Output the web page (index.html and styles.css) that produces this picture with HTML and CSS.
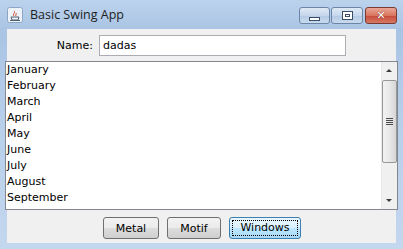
FILE: index.html
```html
<!DOCTYPE html>
<html lang="en">
<head>
  <meta charset="UTF-8" />
  <title>Basic Swing App</title>
  <link rel="stylesheet" href="styles.css">
</head>
<body>
  <div class="window">
    <div class="titlebar">
      <div class="app-icon">
        <svg width="16" height="16" viewBox="0 0 16 16">
          <rect x="0.5" y="0.5" width="15" height="15" rx="2" fill="#eef3f9" stroke="#8ea6c4"/>
          <path d="M4 10 h8 l-1 3 h-6 z" fill="none" stroke="#506070" stroke-width="1"/>
          <path d="M3 13.5 h10" stroke="#506070"/>
          <path d="M7 9 c-2 -2 2 -3 0 -5 M9 9 c-1 -1 1 -2 0 -3" fill="none" stroke="#d04020" stroke-width="1"/>
        </svg>
      </div>
      <span class="title">Basic Swing App</span>
      <div class="controls">
        <div class="ctl ctl-min"><span class="min-glyph"></span></div>
        <div class="ctl ctl-max"><span class="max-glyph"></span></div>
        <div class="ctl ctl-close">&#10005;</div>
      </div>
    </div>

    <div class="content">
      <div class="name-row">
        <label for="name">Name:</label>
        <input type="text" id="name" value="dadas" />
      </div>

      <div class="list">
        <ul class="items">
          <li>January</li>
          <li>February</li>
          <li>March</li>
          <li>April</li>
          <li>May</li>
          <li>June</li>
          <li>July</li>
          <li>August</li>
          <li>September</li>
          <li>October</li>
        </ul>
        <div class="scrollbar">
          <div class="arrow up"></div>
          <div class="track">
            <div class="thumb"><span class="grip"></span></div>
          </div>
          <div class="arrow down"></div>
        </div>
      </div>

      <div class="buttons">
        <button class="btn-metal">Metal</button>
        <button class="btn-motif">Motif</button>
        <button class="btn-windows focused"><span>Windows</span></button>
      </div>
    </div>
  </div>
</body>
</html>
```

FILE: styles.css
```css
* {
  box-sizing: border-box;
}

body {
  margin: 0;
  width: 403px;
  height: 249px;
  overflow: hidden;
  font-family: 'DejaVu Sans', Tahoma, sans-serif;
  font-size: 11px;
  color: #000;
}

.window {
  width: 403px;
  height: 249px;
  background: linear-gradient(to bottom, #bcd3ec 0px, #a9c4e4 30px, #b8cfea 120px, #c3d7ee 249px);
  padding: 0 6px 6px 6px;
  display: flex;
  flex-direction: column;
}

.titlebar {
  height: 29px;
  display: flex;
  align-items: center;
  padding-left: 1px;
}

.app-icon {
  width: 16px;
  height: 16px;
  margin-top: 1px;
}

.title {
  font-family: 'Open Sans', sans-serif;
  font-size: 12.5px;
  margin-left: 7px;
  margin-top: -1px;
  color: #1e1e1e;
}

.controls {
  margin-left: auto;
  display: flex;
  gap: 1px;
  align-self: flex-start;
  margin-top: 7px;
}

.ctl {
  height: 17px;
  width: 31px;
  border: 1px solid #6d86a8;
  border-radius: 3px;
  background: linear-gradient(to bottom, #dfe9f5 0%, #c6d7ec 50%, #b4c9e3 51%, #c8daee 100%);
  display: flex;
  align-items: center;
  justify-content: center;
}

.ctl-max {
  width: 32px;
}

.ctl-close {
  width: 32px;
  margin-left: 1px;
  border-color: #7a3a34;
  background: linear-gradient(to bottom, #e9a796 0%, #d8755f 50%, #c6493a 51%, #d67a62 100%);
  color: #fff;
  font-size: 11px;
  font-weight: bold;
  text-shadow: 0 0 1px #5a1a14;
}

.min-glyph {
  width: 11px;
  height: 4px;
  margin-top: 6px;
  background: #fff;
  border: 1px solid #3c4d66;
}

.max-glyph {
  width: 11px;
  height: 9px;
  background: #fff;
  border: 1px solid #3c4d66;
  box-shadow: inset 0 0 0 2px #fff, inset 0 0 0 3px #3c4d66;
}

.content {
  flex: 1;
  background: #f0f0f0;
  display: flex;
  flex-direction: column;
  margin: 0 1px;
}

.name-row {
  height: 32px;
  display: flex;
  align-items: center;
}

.name-row label {
  width: 86px;
  text-align: right;
  margin-right: 6px;
}

.name-row input {
  width: 247px;
  height: 21px;
  border: 1px solid #abadb3;
  padding: 0 3px;
  font-family: 'DejaVu Sans', sans-serif;
  font-size: 11px;
}

.list {
  height: 149px;
  margin: 0 -2px;
  border: 1px solid #828790;
  background: #fff;
  display: flex;
}

.items {
  list-style: none;
  margin: 0;
  padding: 0;
  flex: 1;
  overflow: hidden;
}

.items li {
  height: 16px;
  line-height: 16px;
  padding-left: 1px;
}

.scrollbar {
  width: 16px;
  background: #f0f0f0;
  border-left: 1px solid #e8e8e8;
  display: flex;
  flex-direction: column;
}

.arrow {
  height: 17px;
  position: relative;
}

.arrow::after {
  content: "";
  position: absolute;
  left: 4px;
  border-left: 3px solid transparent;
  border-right: 3px solid transparent;
}

.arrow.up::after {
  top: 7px;
  border-bottom: 3px solid #3a3a3a;
}

.arrow.down::after {
  top: 7px;
  border-top: 3px solid #3a3a3a;
}

.track {
  flex: 1;
  padding-top: 1px;
}

.thumb {
  height: 83px;
  border: 1px solid #979797;
  border-radius: 2px;
  background: linear-gradient(to right, #f2f2f2, #e8e8e8 50%, #d6d6d6);
  display: flex;
  align-items: center;
  justify-content: center;
}

.grip {
  width: 7px;
  height: 7px;
  background: repeating-linear-gradient(to bottom, #4a4a4a 0 1px, transparent 1px 2px);
}

.buttons {
  flex: 1;
  display: flex;
  justify-content: center;
  align-items: center;
  gap: 8px;
  padding-left: 1px;
  padding-top: 3px;
}

.buttons button {
  height: 22px;
  padding: 0;
  border: 1px solid #707070;
  border-radius: 3px;
  background: linear-gradient(to bottom, #f2f2f2 0%, #ebebeb 50%, #dddddd 51%, #cfcfcf 100%);
  font-family: 'DejaVu Sans', sans-serif;
  font-size: 11px;
  color: #000;
}

.btn-metal {
  width: 56px;
}

.btn-motif {
  width: 54px;
}

.btn-windows {
  width: 72px;
}

.buttons button.focused {
  padding: 2px;
  border-color: #3c7fb1;
  background: linear-gradient(to bottom, #eaf6fd 0%, #d9f0fc 50%, #bee6fd 51%, #a7d9f5 100%);
}

.buttons button.focused span {
  display: block;
  height: 16px;
  line-height: 14px;
  border: 1px dotted #000;
}
```
